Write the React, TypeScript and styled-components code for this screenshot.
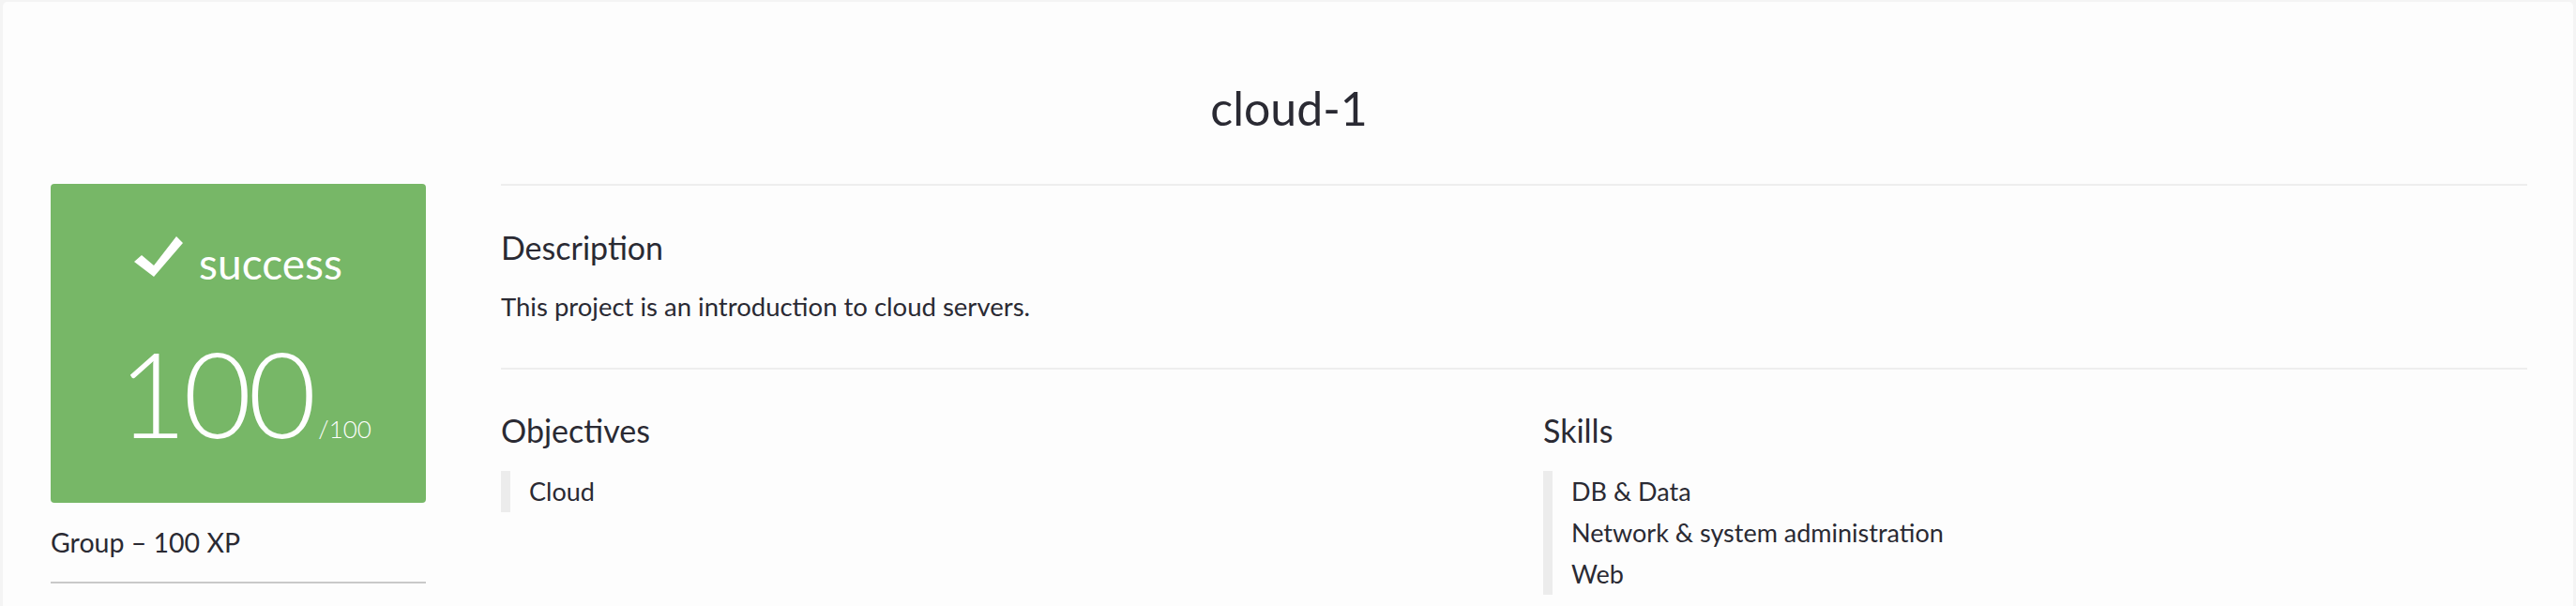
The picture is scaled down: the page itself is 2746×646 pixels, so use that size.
import React from "react";
import styled, { createGlobalStyle } from "styled-components";

const Global = createGlobalStyle`
  html, body { margin: 0; padding: 0; background: #f4f4f4; }
  body { font-family: Lato, "Liberation Sans", sans-serif; color: #2a2a33; overflow: hidden; }
  * { box-sizing: border-box; }
`;

const Card = styled.div`
  margin: 2px 3px 0 3px;
  background: #fdfdfd;
  border-radius: 5px;
  padding: 83px 49px 40px 51px;
  min-height: 700px;
`;

const Title = styled.h1`
  margin: 0 0 51px 0;
  text-align: center;
  font-weight: 400;
  font-size: 50px;
  line-height: 60px;
  color: #2a2a33;
`;

const Body = styled.div`
  display: flex;
  gap: 80px;
  align-items: flex-start;
`;

const Side = styled.aside`
  width: 400px;
  flex: none;
  display: flex;
  flex-direction: column;
`;

const ScoreBox = styled.div`
  height: 340px;
  background: #77b767;
  border-radius: 4px;
  color: #ffffff;
  display: flex;
  flex-direction: column;
  align-items: center;
  padding-top: 57px;
`;

const StatusRow = styled.div`
  display: flex;
  align-items: flex-start;
  gap: 17px;
  font-size: 46px;
  line-height: 56px;
`;

const CheckIcon = styled.svg`
  width: 52px;
  height: 43px;
  margin-top: -1px;
  fill: #ffffff;
`;

const ScoreRow = styled.div`
  margin-top: 48px;
  display: flex;
  align-items: baseline;
  margin-left: 14px;
`;

const Score = styled.span`
  font-size: 126px;
  line-height: 124px;
  font-weight: 300;
  letter-spacing: -4px;
`;

const ScoreMax = styled.span`
  font-size: 26px;
  margin-left: 6px;
  font-weight: 300;
`;

const GroupInfo = styled.div`
  margin-top: 24px;
  font-size: 28.5px;
  line-height: 36px;
`;

const SideRule = styled.hr`
  margin: 24px 0 0 0;
  border: 0;
  height: 2px;
  background: #c9c9c9;
`;

const SideMeta = styled.div`
  margin-top: 19px;
  padding-left: 8px;
  display: flex;
  align-items: center;
  height: 30px;
`;

const MetaIcon = styled.svg`
  width: 14px;
  height: 20px;
  stroke: #2a2a33;
  stroke-width: 2;
  fill: none;
`;

const Main = styled.main`
  flex: 1;
  min-width: 0;
`;

const Section = styled.section<{ $pt: number; $pb: number }>`
  border-top: 2px solid #eeeeee;
  padding-top: ${(p) => p.$pt}px;
  padding-bottom: ${(p) => p.$pb}px;
`;

const Heading = styled.h2`
  margin: 0;
  font-weight: 400;
  font-size: 34px;
  line-height: 40px;
`;

const Paragraph = styled.p`
  margin: 25px 0 0 0;
  font-size: 27.5px;
  line-height: 36px;
`;

const Columns = styled.div`
  display: grid;
  grid-template-columns: 1111px 1fr;
`;

const List = styled.ul`
  list-style: none;
  margin: 23px 0 0 0;
  padding: 0 0 0 20px;
  border-left: 10px solid #ececec;
`;

const Item = styled.li`
  font-size: 27px;
  line-height: 44px;
`;

export default function App() {
  return (
    <>
      <Global />
      <Card>
        <Title>cloud-1</Title>
        <Body>
          <Side>
            <ScoreBox>
              <StatusRow>
                <CheckIcon viewBox="0 0 52 43">
                  <polygon points="45,0 52,7 21,43 0,27 8,20 21,31" />
                </CheckIcon>
                <span>success</span>
              </StatusRow>
              <ScoreRow>
                <Score>100</Score>
                <ScoreMax>/100</ScoreMax>
              </ScoreRow>
            </ScoreBox>
            <GroupInfo>Group – 100 XP</GroupInfo>
            <SideRule />
            <SideMeta>
              <MetaIcon viewBox="0 0 14 20">
                <path d="M2 1h10M7 1v18" />
              </MetaIcon>
            </SideMeta>
          </Side>
          <Main>
            <Section $pt={46} $pb={47}>
              <Heading>Description</Heading>
              <Paragraph>This project is an introduction to cloud servers.</Paragraph>
            </Section>
            <Section $pt={45} $pb={40}>
              <Columns>
                <div>
                  <Heading>Objectives</Heading>
                  <List>
                    <Item>Cloud</Item>
                  </List>
                </div>
                <div>
                  <Heading>Skills</Heading>
                  <List>
                    <Item>DB &amp; Data</Item>
                    <Item>Network &amp; system administration</Item>
                    <Item>Web</Item>
                  </List>
                </div>
              </Columns>
            </Section>
          </Main>
        </Body>
      </Card>
    </>
  );
}
